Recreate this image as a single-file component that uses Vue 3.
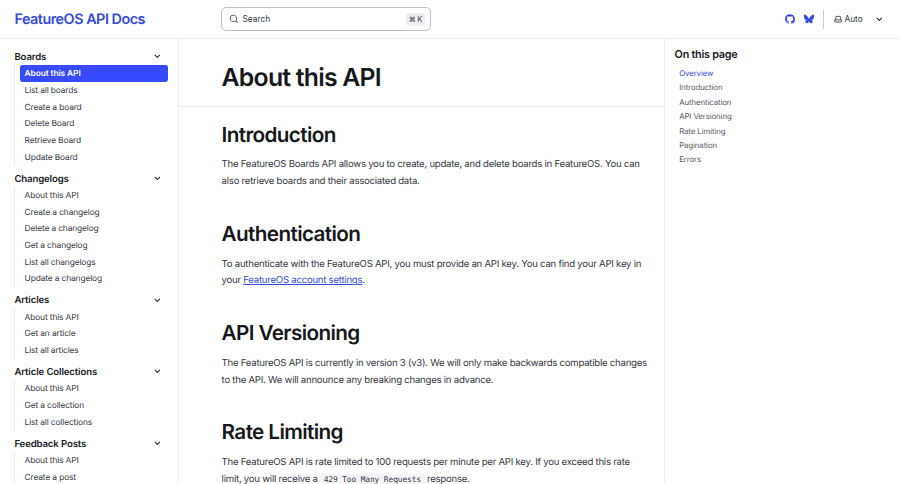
<template>
  <div class="page">
    <header class="header">
      <a class="site-title" href="#">FeatureOS API Docs</a>
      <div class="search-area">
        <button class="search">
          <svg class="search-icon" viewBox="0 0 24 24" fill="currentColor">
            <path d="M21.71 20.29 18 16.61A9 9 0 1 0 16.61 18l3.68 3.68a1 1 0 0 0 1.42 0 1 1 0 0 0 0-1.39ZM11 18a7 7 0 1 1 0-14 7 7 0 0 1 0 14Z" />
          </svg>
          <span class="search-label">Search</span>
          <kbd class="shortcut">
            <svg viewBox="0 0 24 24" fill="none" stroke="currentColor" stroke-width="2.2">
              <path d="M9 9V6a3 3 0 1 0-3 3h12a3 3 0 1 0-3-3v12a3 3 0 1 0 3-3H6a3 3 0 1 0 3 3V9" />
            </svg>
            <span>K</span>
          </kbd>
        </button>
      </div>
      <div class="header-right">
        <a class="social" href="#" aria-label="GitHub">
          <svg viewBox="0 0 24 24" fill="currentColor">
            <path d="M12 .3a12 12 0 0 0-3.8 23.38c.6.12.83-.26.83-.57L9 21.07c-3.34.72-4.04-1.61-4.04-1.61-.55-1.39-1.34-1.76-1.34-1.76-1.08-.74.09-.73.09-.73 1.2.09 1.83 1.24 1.83 1.24 1.08 1.83 2.81 1.3 3.5 1 .1-.78.42-1.31.76-1.61-2.67-.3-5.47-1.33-5.47-5.93 0-1.31.47-2.38 1.24-3.22-.14-.3-.54-1.52.1-3.18 0 0 1-.32 3.3 1.23a11.5 11.5 0 0 1 6 0c2.28-1.55 3.29-1.23 3.29-1.23.64 1.66.24 2.88.12 3.18a4.65 4.65 0 0 1 1.23 3.22c0 4.61-2.8 5.63-5.48 5.92.42.36.81 1.1.81 2.22l-.01 3.29c0 .31.2.69.82.57A12 12 0 0 0 12 .3Z" />
          </svg>
        </a>
        <a class="social" href="#" aria-label="Bluesky">
          <svg viewBox="0 0 24 24" fill="currentColor">
            <path d="M5.2 2.9C8 4.9 10.9 9.1 12 11.3c1.1-2.2 4-6.4 6.8-8.4 2-1.5 5.2-2.6 5.2 1 0 .7-.4 6.2-.7 7-.9 3-4 3.8-6.8 3.3 4.9.8 6.1 3.5 3.4 6.2-5.1 5.1-7.3-1.3-7.9-2.9-.6 1.6-2.8 8-7.9 2.9-2.7-2.7-1.5-5.4 3.4-6.2-2.8.5-5.9-.3-6.800-3.300-.3-.8-.7-6.300-.7-7 0-3.600 3.200-2.500 5.200-1Z" />
          </svg>
        </a>
        <span class="divider"></span>
        <button class="theme-select">
          <svg class="laptop" viewBox="0 0 24 24" fill="none" stroke="currentColor" stroke-width="2.4" stroke-linejoin="round">
            <path d="M5 14V6a2 2 0 0 1 2-2h10a2 2 0 0 1 2 2v8M2 14h20v4a2 2 0 0 1-2 2H4a2 2 0 0 1-2-2Z" />
          </svg>
          <span>Auto</span>
          <svg class="caret" viewBox="0 0 24 24" fill="currentColor"><path :d="caret" /></svg>
        </button>
      </div>
    </header>

    <div class="body">
      <nav class="sidebar">
        <section v-for="(group, i) in groups" :key="group.label" class="group">
          <div class="group-title">
            <span>{{ group.label }}</span>
            <svg class="caret" viewBox="0 0 24 24" fill="currentColor"><path :d="caret" /></svg>
          </div>
          <ul class="group-items">
            <li v-for="(item, j) in group.items" :key="item">
              <a href="#" :class="{ current: i === 0 && j === 0 }">{{ item }}</a>
            </li>
          </ul>
        </section>
      </nav>

      <main class="main">
        <div class="title-panel">
          <h1>About this API</h1>
        </div>
        <div class="content">
          <h2>Introduction</h2>
          <p>
            The FeatureOS Boards API allows you to create, update, and delete boards in FeatureOS. You can<br>
            also retrieve boards and their associated data.
          </p>
          <h2>Authentication</h2>
          <p>
            To authenticate with the FeatureOS API, you must provide an API key. You can find your API key in<br>
            your <a href="#">FeatureOS account settings</a>.
          </p>
          <h2>API Versioning</h2>
          <p>
            The FeatureOS API is currently in version 3 (v3). We will only make backwards compatible changes<br>
            to the API. We will announce any breaking changes in advance.
          </p>
          <h2>Rate Limiting</h2>
          <p>
            The FeatureOS API is rate limited to 100 requests per minute per API key. If you exceed this rate<br>
            limit, you will receive a <code>429 Too Many Requests</code> response.
          </p>
        </div>
      </main>

      <aside class="toc">
        <h2>On this page</h2>
        <ul>
          <li v-for="(entry, i) in toc" :key="entry">
            <a href="#" :class="{ current: i === 0 }">{{ entry }}</a>
          </li>
        </ul>
      </aside>
    </div>
  </div>
</template>

<script setup>
const caret = 'M17 9.17a1 1 0 0 0-1.41 0L12 12.71 8.46 9.17a1 1 0 1 0-1.41 1.42l4.24 4.24a1 1 0 0 0 1.42 0L17 10.59a1 1 0 0 0 0-1.42Z'

const groups = [
  {
    label: 'Boards',
    items: ['About this API', 'List all boards', 'Create a board', 'Delete Board', 'Retrieve Board', 'Update Board']
  },
  {
    label: 'Changelogs',
    items: ['About this API', 'Create a changelog', 'Delete a changelog', 'Get a changelog', 'List all changelogs', 'Update a changelog']
  },
  {
    label: 'Articles',
    items: ['About this API', 'Get an article', 'List all articles']
  },
  {
    label: 'Article Collections',
    items: ['About this API', 'Get a collection', 'List all collections']
  },
  {
    label: 'Feedback Posts',
    items: ['About this API', 'Create a post']
  }
]

const toc = ['Overview', 'Introduction', 'Authentication', 'API Versioning', 'Rate Limiting', 'Pagination', 'Errors']
</script>

<style>
body {
  background: #fff;
  overflow: hidden;
}
</style>

<style scoped>
.page {
  height: 484px;
  display: flex;
  flex-direction: column;
  overflow: hidden;
  font-family: Inter, "Liberation Sans", sans-serif;
  font-size: 9.6px;
  text-rendering: geometricPrecision;
  color: #353841;
}

.page * {
  box-sizing: border-box;
}

a {
  color: inherit;
  text-decoration: none;
}

ul {
  list-style: none;
  margin: 0;
  padding: 0;
}

button {
  font: inherit;
  color: inherit;
  background: none;
  border: none;
  padding: 0;
}

svg {
  display: block;
  flex: none;
}

.header {
  flex: none;
  height: 39px;
  display: flex;
  align-items: center;
  padding: 0 14.4px;
  border-bottom: 1px solid #eeeff2;
}

.site-title {
  width: 207px;
  font-size: 14.4px;
  font-weight: 600;
  letter-spacing: -0.5px;
  white-space: nowrap;
  color: #364bdc;
}

.search-area {
  flex: 1;
}

.search {
  width: 210px;
  height: 24px;
  display: flex;
  align-items: center;
  padding: 0 5px 0 7px;
  border: 1px solid #c0c2c7;
  border-radius: 5px;
  font-size: 8.4px;
}

.search-icon {
  width: 9.6px;
  height: 9.6px;
}

.search-label {
  margin-left: 3.5px;
}

.shortcut {
  margin-left: auto;
  display: flex;
  align-items: center;
  gap: 2px;
  height: 13px;
  padding: 0 3px;
  border-radius: 3px;
  background: #eceef2;
  font-family: inherit;
  font-size: 7.6px;
}

.shortcut svg {
  width: 6.6px;
  height: 6.6px;
}

.header-right {
  display: flex;
  align-items: center;
}

.social {
  margin-right: 9.2px;
  color: #364bdc;
}

.social svg {
  width: 10px;
  height: 10px;
}

.divider {
  width: 1px;
  height: 19px;
  margin-right: 10px;
  background: #c9cbd1;
}

.theme-select {
  display: flex;
  align-items: center;
  font-size: 8.4px;
}

.laptop {
  width: 8.4px;
  height: 8.4px;
  margin-right: 2px;
}

.caret {
  width: 12.6px;
  height: 12.6px;
  color: #17181c;
}

.theme-select .caret {
  margin: 0 -0.4px 0 10.6px;
}

.body {
  flex: 1;
  min-height: 0;
  display: flex;
}

.sidebar {
  flex: none;
  width: 179px;
  padding: 9.4px 10px 0 14.4px;
  border-right: 1px solid #eeeff2;
}

.group {
  margin-bottom: 4.6px;
}

.group-title {
  height: 17px;
  display: flex;
  align-items: center;
  justify-content: space-between;
  padding-right: 4.6px;
  font-size: 9.6px;
  font-weight: 600;
  letter-spacing: -0.13px;
  color: #17181c;
}

.group-title span {
  padding-top: 1px;
}

.group-title .caret {
  margin-bottom: 1px;
}

.group-items {
  border-left: 1px solid #e9eaee;
  padding-left: 4.6px;
}

.group-items a {
  height: 16.7px;
  display: flex;
  align-items: center;
  padding: 1px 0 0 4.6px;
  font-size: 8.4px;
  letter-spacing: -0.13px;
}

.group-items a.current {
  background: #364bff;
  color: #fff;
  font-weight: 600;
  border-radius: 2.4px;
  letter-spacing: -0.1px;
}

.main {
  width: 485px;
}

.title-panel {
  height: 68px;
  padding: 24px 0 0 42.6px;
  border-bottom: 1px solid #eeeff2;
}

h1,
h2 {
  margin: 0;
  font-weight: 600;
  line-height: 1.2;
  color: #17181c;
}

h1 {
  font-size: 24.8px;
  letter-spacing: -0.77px;
}

.content {
  padding: 14.8px 0 0 42.6px;
}

.content h2 {
  font-size: 20.7px;
  line-height: 25.2px;
  letter-spacing: -0.62px;
}

.content p {
  margin: 10.4px 0 30px;
  line-height: 16.8px;
  letter-spacing: -0.245px;
  white-space: nowrap;
}

.content p a {
  color: #364bdc;
  text-decoration: underline;
}

code {
  padding: 1.2px 3.6px;
  background: #f3f4f7;
  font-family: "DejaVu Sans Mono", monospace;
  font-size: 7.9px;
  letter-spacing: -0.12px;
}

.toc {
  flex: 1;
  padding: 9px 0 0 9.6px;
  border-left: 1px solid #eeeff2;
}

.toc h2 {
  font-size: 10.8px;
  line-height: 13px;
  letter-spacing: -0.25px;
  margin-bottom: 4.6px;
}

.toc a {
  height: 14.45px;
  display: flex;
  align-items: center;
  padding-left: 4.6px;
  font-size: 7.8px;
  letter-spacing: -0.09px;
  color: #555862;
}

.toc a.current {
  color: #364bdc;
}
</style>
